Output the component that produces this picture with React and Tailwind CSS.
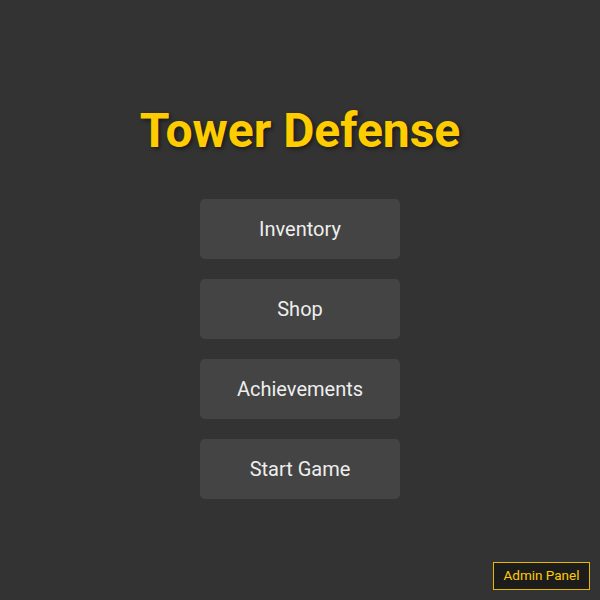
export default function App() {
  return (
    <div className="relative w-full h-[600px] bg-[#333333] flex flex-col items-center justify-center" style={{ fontFamily: 'Roboto, "Liberation Sans", sans-serif' }}>
      <h1 className="mt-[2px] text-[48px] leading-[56px] font-bold text-[#ffcc00] mb-10 [text-shadow:2px_2px_4px_rgba(0,0,0,0.5)]">Tower Defense</h1>
      <div className="flex flex-col gap-5">
        {["Inventory", "Shop", "Achievements", "Start Game"].map((t) => (
          <button key={t} className="w-[200px] h-[60px] rounded-[5px] bg-[#444444] text-[#eeeeee] text-[20px]">{t}</button>
        ))}
      </div>
      <button className="absolute right-[10px] bottom-[10px] w-[97px] h-[28px] bg-[#1c1c1c] border border-[#e6b800] text-[#ffcc00] text-[13.5px] leading-none">Admin Panel</button>
    </div>
  );
}
